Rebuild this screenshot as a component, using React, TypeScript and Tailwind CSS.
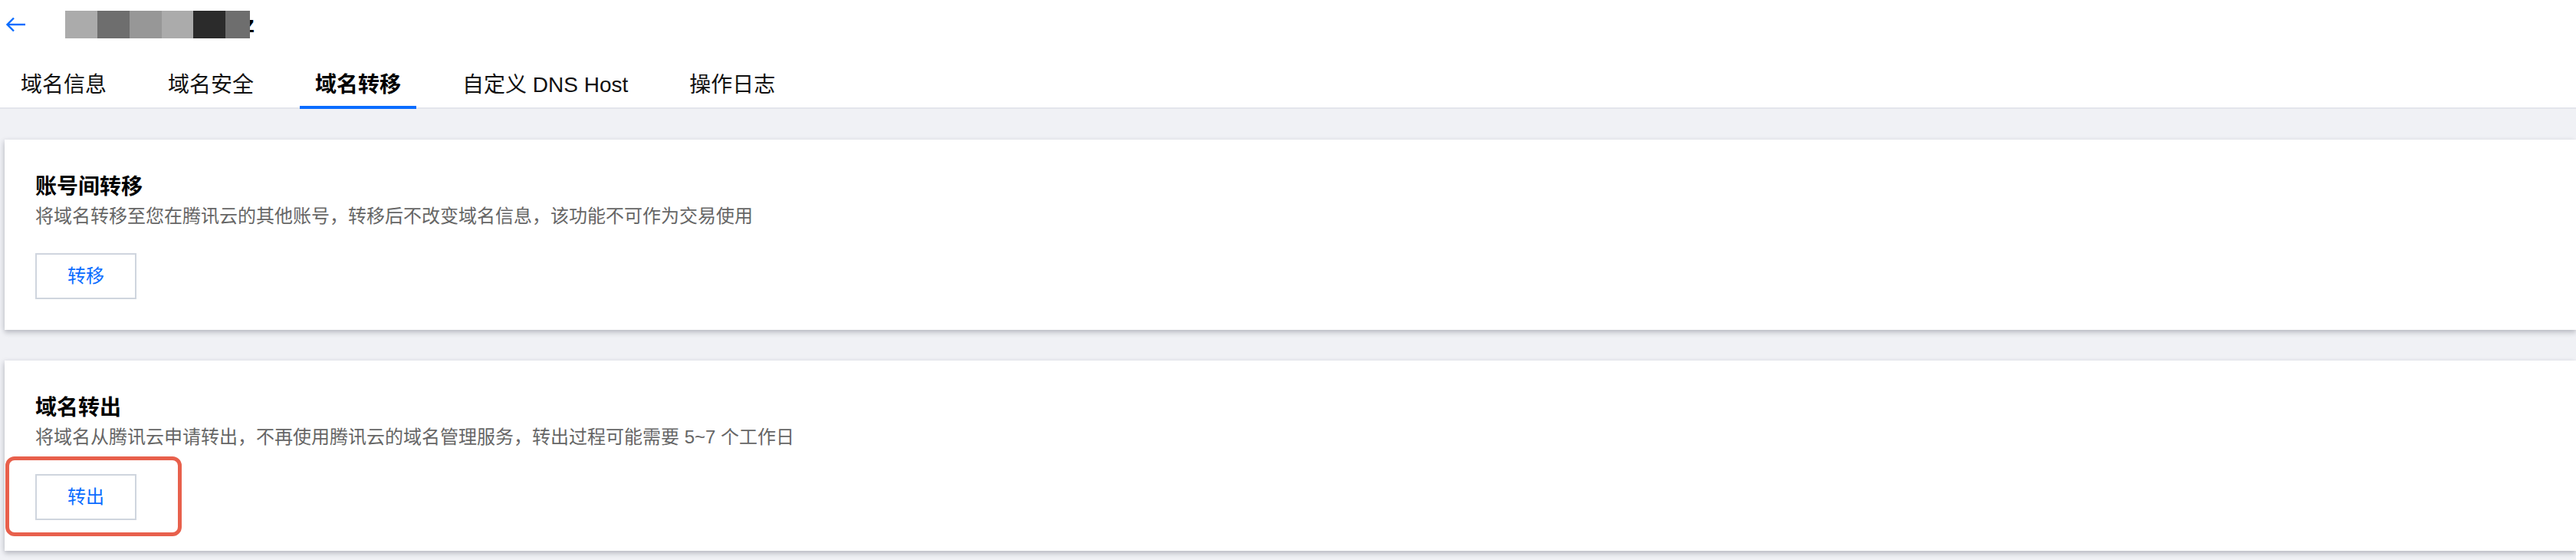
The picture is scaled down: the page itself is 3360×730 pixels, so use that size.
import React from 'react';

const FONT = '"Liberation Sans", "Noto Sans CJK SC", sans-serif';

const tabs = ['域名信息', '域名安全', '域名转移', '自定义 DNS Host', '操作日志'];
const activeTab = 2;

// redacted domain name in the header
const maskBlocks = [
  { w: 'w-[42px]', c: 'bg-[#ababab]' },
  { w: 'w-[42px]', c: 'bg-[#6e6e6e]' },
  { w: 'w-[42px]', c: 'bg-[#979797]' },
  { w: 'w-[41px]', c: 'bg-[#ababab]' },
  { w: 'w-[42px]', c: 'bg-[#2b2b2b]' },
  { w: 'w-[32px]', c: 'bg-[#6e6e6e]' },
];

const BackArrow: React.FC = () => (
  <svg width="27" height="22" viewBox="0 0 27 22" fill="none">
    <path d="M26 11H3" stroke="#0a6cff" strokeWidth="2.4" />
    <path d="M11 2.5L2.5 11L11 19.5" stroke="#0a6cff" strokeWidth="2.4" strokeLinejoin="miter" />
  </svg>
);

type CardProps = {
  title: string;
  desc: string;
  action: string;
  highlight?: boolean;
};

const TransferCard: React.FC<CardProps> = ({ title, desc, action, highlight }) => (
  <div className="relative bg-white pt-[42px] pb-[40px] px-[40px] shadow-[0_4px_6px_rgba(40,44,60,0.22),-2px_0_6px_rgba(40,44,60,0.08)]">
    <h3 className="text-[28px] leading-[40px] font-bold text-black">{title}</h3>
    <p className="text-[24px] leading-[36px] text-[#666]">{desc}</p>
    <button className="mt-[30px] w-[132px] h-[60px] border-2 border-[#cfd5de] bg-white text-[24px] leading-[56px] text-[#0a6cff]">
      {action}
    </button>
    {highlight && (
      <div className="absolute left-[1px] top-[125px] w-[230px] h-[104px] border-[5px] border-[#e8604c] rounded-[12px] pointer-events-none" />
    )}
  </div>
);

export default function App() {
  return (
    <div className="h-[730px] w-full overflow-hidden bg-[#f0f1f5]" style={{ fontFamily: FONT }}>
      {/* Header */}
      <div className="bg-white">
        <div className="h-[64px] flex items-center pl-[7px]">
          <BackArrow />
          <div className="ml-[51px] flex items-center h-[36px]">
            {maskBlocks.map((b, i) => (
              <div key={i} className={`${b.w} ${b.c} h-[36px]`} />
            ))}
            <div className="w-[8px] h-[36px] overflow-hidden">
              <span className="block -ml-[9px] text-[30px] leading-[36px] font-bold text-black">z</span>
            </div>
          </div>
        </div>

        {/* Tabs */}
        <div className="flex gap-[40px] pl-[7px] border-b-2 border-[#e3e5ec]">
          {tabs.map((t, i) => (
            <div
              key={t}
              className={`px-[20px] pt-[27px] pb-[7px] -mb-[2px] border-b-4 text-[28px] leading-[40px] whitespace-nowrap ${
                i === activeTab ? 'border-[#0a6cff] font-bold text-black' : 'border-transparent text-[#111]'
              }`}
            >
              {t}
            </div>
          ))}
        </div>
      </div>

      {/* Content */}
      <div className="pt-[40px] pl-[6px] flex flex-col gap-[40px]">
        <TransferCard
          title="账号间转移"
          desc="将域名转移至您在腾讯云的其他账号，转移后不改变域名信息，该功能不可作为交易使用"
          action="转移"
        />
        <TransferCard
          title="域名转出"
          desc="将域名从腾讯云申请转出，不再使用腾讯云的域名管理服务，转出过程可能需要 5~7 个工作日"
          action="转出"
          highlight
        />
      </div>
    </div>
  );
}
